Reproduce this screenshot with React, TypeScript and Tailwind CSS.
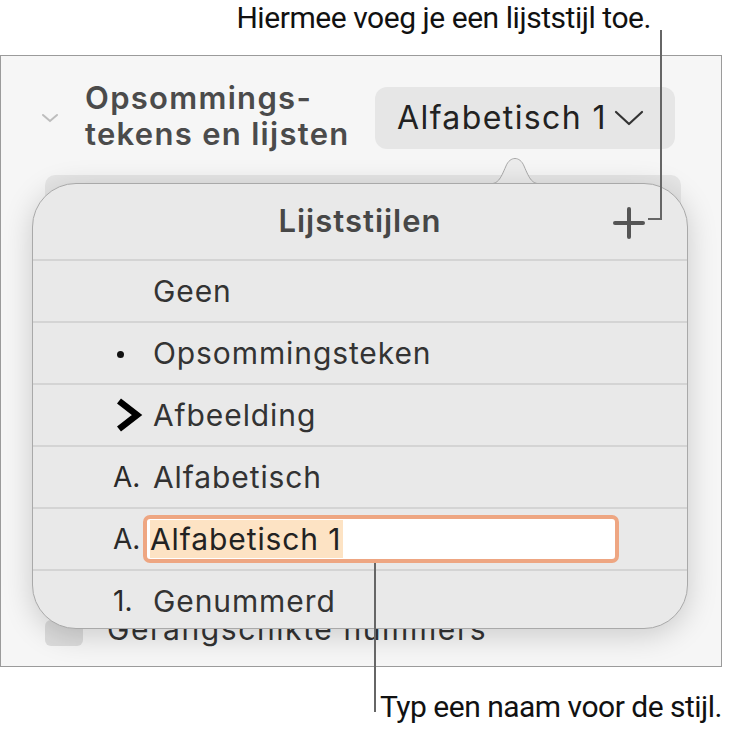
import React from "react";

const ui = { fontFamily: "Inter, 'Noto Sans', sans-serif" };
const callout = { fontFamily: "Roboto, 'Liberation Sans', sans-serif" };

function Row(props: { marker?: React.ReactNode; label: string; children?: React.ReactNode }) {
  return (
    <div className="flex h-[62px] items-center border-t-2 border-[#d4d4d4]">
      <div className="flex w-[120px] shrink-0 items-center pl-[80px] text-[28px] text-[#2a2a2a]">
        {props.marker}
      </div>
      {props.children ?? (
        <span className="text-[30px] tracking-[0.9px] text-[#333]">{props.label}</span>
      )}
    </div>
  );
}

export default function App() {
  return (
    <div className="relative h-[729px] w-[729px] overflow-hidden bg-white" style={ui}>
      {/* top callout */}
      <div className="flex h-[55px] justify-end pr-[78px] pt-[2px]">
        <span className="text-[30px] leading-[32px] tracking-[-0.45px] text-[#111]" style={callout}>
          Hiermee voeg je een lijststijl toe.
        </span>
      </div>

      {/* sidebar panel */}
      <div className="relative h-[612px] w-[722px] border border-[#9b9b9b] bg-[#f6f6f6]">
        <div className="flex items-start pt-[24px]">
          <svg width="18" height="10" viewBox="0 0 18 10" className="ml-[40px] mt-[33px]">
            <polyline points="2,2 9,8 16,2" fill="none" stroke="#bdbdbd" strokeWidth="2" strokeLinecap="round" />
          </svg>
          <div className="ml-[26px] w-[290px] text-[31px] font-semibold leading-[36px] tracking-[1.3px] text-[#4b4b4b]">
            Opsommings-
            <br />
            tekens en lijsten
          </div>
          <div className="ml-[0px] mt-[7px] flex h-[62px] w-[300px] items-center rounded-[12px] bg-[#e6e6e6] pl-[22px]">
            <span className="text-[32px] tracking-[1.4px] text-[#222]">Alfabetisch 1</span>
            <svg width="32" height="18" viewBox="0 0 32 18" className="ml-[6px]">
              <polyline points="3,3 16,15 29,3" fill="none" stroke="#333" strokeWidth="2.2" strokeLinecap="round" strokeLinejoin="round" />
            </svg>
          </div>
        </div>
        <div className="ml-[44px] mt-[23px] h-[432px] w-[636px] rounded-[10px] bg-[#e6e6e6]" />
        <div className="ml-[44px] mt-[6px] flex items-center gap-[24px]">
          <div className="h-[26px] w-[38px] rounded-[6px] bg-[#dcdcdc]" />
          <span className="-mt-[6px] text-[30px] tracking-[1.6px] text-[#333]">Gerangschikte nummers</span>
        </div>
      </div>

      {/* bottom callout */}
      <div className="flex justify-end pr-[7px] pt-[24px]">
        <span className="text-[30px] leading-[32px] tracking-[-0.5px] text-[#111]" style={callout}>
          Typ een naam voor de stijl.
        </span>
      </div>

      {/* popover notch */}
      <svg
        className="absolute left-[470px] top-[152px]"
        width="90"
        height="34"
        viewBox="0 0 90 34"
      >
        <path
          d="M0,32 L18,32 C28,32 30,28 36,14 C40,4 50,4 54,14 C60,28 62,32 72,32 L90,32 L90,34 L0,34 Z"
          fill="#ececec"
        />
        <path
          d="M0,32 L18,32 C28,32 30,28 36,14 C40,4 50,4 54,14 C60,28 62,32 72,32 L90,32"
          fill="none"
          stroke="#a9a9a9"
          strokeWidth="1"
        />
      </svg>

      {/* popover */}
      <div className="absolute left-[32px] top-[183px] h-[446px] w-[656px] overflow-hidden rounded-[44px] border border-[#a9a9a9] bg-[#e9e9e9] shadow-[0_6px_30px_rgba(0,0,0,0.18)]">
        <div className="relative flex h-[75px] items-center justify-center">
          <span className="text-[31px] font-semibold tracking-[1px] text-[#474747]">Lijststijlen</span>
          <svg width="32" height="32" viewBox="0 0 32 32" className="absolute left-[580px] top-[23px]">
            <line x1="16" y1="2" x2="16" y2="30" stroke="#555" strokeWidth="4" strokeLinecap="round" />
            <line x1="2" y1="16" x2="30" y2="16" stroke="#555" strokeWidth="4" strokeLinecap="round" />
          </svg>
        </div>
        <Row label="Geen" />
        <Row
          label="Opsommingsteken"
          marker={<span className="ml-[4px] mt-[2px] h-[7px] w-[7px] rounded-full bg-[#111]" />}
        />
        <Row
          label="Afbeelding"
          marker={
            <svg width="30" height="36" viewBox="0 0 30 36">
              <polyline points="6,4 24,18 6,32" fill="none" stroke="#000" strokeWidth="6.5" strokeLinejoin="miter" />
            </svg>
          }
        />
        <Row label="Alfabetisch" marker={<span>A.</span>} />
        <Row label="Alfabetisch 1" marker={<span>A.</span>}>
          <div className="-ml-[10px] flex h-[48px] w-[476px] items-center rounded-[7px] border-[4px] border-[#eea682] bg-white pl-[3px]">
            <span className="bg-[#fde3c4] pr-[2px] text-[30px] leading-[38px] tracking-[0.9px] text-[#222]">Alfabetisch 1</span>
          </div>
        </Row>
        <Row label="Genummerd" marker={<span>1.</span>} />
      </div>

      {/* leader lines */}
      <div className="absolute left-[660px] top-[30px] h-[190px] w-[2px] bg-[#666]" />
      <div className="absolute left-[648px] top-[218px] h-[2px] w-[13px] bg-[#666]" />
      <div className="absolute left-[374px] top-[563px] h-[149px] w-[2px] bg-[#666]" />
    </div>
  );
}
